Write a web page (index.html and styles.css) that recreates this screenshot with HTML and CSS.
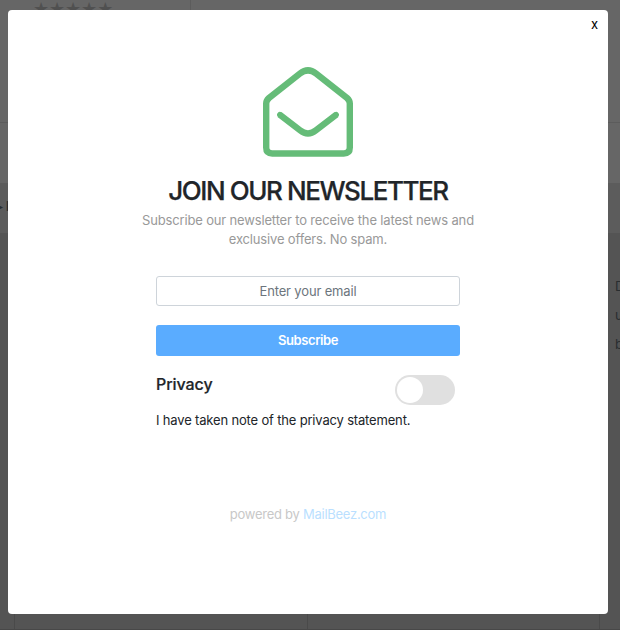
FILE: index.html
```html
<!DOCTYPE html>
<html lang="en">
<head>
<meta charset="utf-8">
<title>Join our newsletter</title>
<link rel="stylesheet" href="styles.css">
</head>
<body>
<div class="page">
  <div class="product"><div class="stars">★★★★★</div></div>
  <div class="shelf"></div>
  <div class="band"><span class="arrow">▸</span><span class="band-label">I</span></div>
  <div class="content">
    <div class="side-copy">D<br>u<br>b</div>
    <div class="columns"><div class="column"></div><div class="column"></div></div>
  </div>
</div>
<main class="modal">
  <button class="close" type="button">x</button>
  <svg class="envelope" viewBox="0 0 90 90" fill="none" stroke="#65bc78" stroke-width="6.4">
    <path d="M3.2 36.500V80.500Q3.200 86.500 9.200 86.500H80.800Q86.800 86.500 86.800 80.500V36.500Q86.800 33.500 84 31L53 6.500Q45 .300 37 6.500L6 31Q3.200 33.500 3.200 36.500Z"/>
    <path d="M16.500 47.500L37 63.300Q45 69.700 53 63.300L73.500 47.500"/>
    <path d="M17 47.900L16.900 47.820M73 47.900L73.100 47.820" stroke-width="5.600" stroke-linecap="round"/>
  </svg>
  <h1 class="title">JOIN OUR NEWSLETTER</h1>
  <p class="intro">Subscribe our newsletter to receive the latest news and<br>exclusive offers. No spam.</p>
  <form class="form">
    <input class="email" type="email" placeholder="Enter your email">
    <button class="subscribe" type="button">Subscribe</button>
    <div class="privacy">
      <h2 class="privacy-title">Privacy</h2>
      <span class="toggle"><span class="knob"></span></span>
    </div>
    <p class="note">I have taken note of the privacy statement.</p>
  </form>
  <p class="powered">powered by <a class="brand">MailBeez.com</a></p>
</main>
</body>
</html>
```
FILE: styles.css
```css
* { box-sizing: border-box; margin: 0; padding: 0; }
body { width: 620px; height: 630px; overflow: hidden; font-family: Inter, "Liberation Sans", sans-serif; font-size: 13px; color: #212529; }
.page { display: flex; flex-direction: column; height: 630px; background: #545454; }
.product { width: 100%; height: 123px; background: linear-gradient(#5c5c5c, #5c5c5c) 190px 0 / 1px 100% no-repeat #666; border-bottom: 1px solid #5c5c5c; }
.stars { padding-left: 33px; font: 18px/18px "DejaVu Sans", sans-serif; letter-spacing: -.1px; color: #505050; }
.shelf { height: 60px; background: #666; }
.band { display: flex; align-items: center; height: 50px; padding-bottom: 4px; background: #5c5c5c; color: #292d30; }
.arrow { width: 6px; font: 10px "DejaVu Sans", sans-serif; margin-left: -2px; }
.band-label { margin-left: 2px; font-weight: 700; }
.content { flex: 1; display: flex; flex-direction: column; justify-content: space-between; border-bottom: 1px solid #484848; }
.side-copy { padding: 39px 0 0 615px; line-height: 29px; color: #292d30; }
.columns { display: flex; height: 40px; margin-left: 14px; width: 586px; border-left: 1px solid #4a4a4a; }
.column { flex: 1; border-right: 1px solid #4a4a4a; }
.modal { position: absolute; left: 8px; top: 10px; width: 600px; height: 604px; border-radius: 4px; background: #fff; display: flex; flex-direction: column; align-items: center; }
.close { align-self: flex-end; margin: 6px 10px 0 0; height: 16px; border: 0; background: none; font: 13px/16px Inter, sans-serif; color: #000; }
.envelope { width: 90px; height: 90px; margin-top: 35px; flex: none; }
.title { margin-top: 18px; font-size: 26px; font-weight: 500; line-height: 32px; letter-spacing: -1.42px; -webkit-text-stroke: .25px #212529; white-space: nowrap; }
.intro { margin-top: 4px; line-height: 19px; letter-spacing: -.16px; text-align: center; color: #999; white-space: nowrap; }
.form { width: 304px; margin-top: 27px; }
.email { display: block; width: 304px; height: 30px; border: 1px solid #ced4da; border-radius: 3px; text-align: center; font: 13px Inter, sans-serif; letter-spacing: -.15px; }
.email::placeholder { color: #6c757d; opacity: 1; }
.subscribe { display: block; width: 304px; height: 31px; margin-top: 19px; padding-bottom: 1px; border: 0; border-radius: 3px; background: #5aacff; color: #fff; font: 600 13px Inter, sans-serif; letter-spacing: -.4px; }
.privacy { display: flex; justify-content: space-between; margin-top: 19px; padding-right: 5px; height: 30px; }
.privacy-title { font-size: 16px; font-weight: 500; line-height: 19px; letter-spacing: -.05px; -webkit-text-stroke: .2px #212529; }
.toggle { display: flex; align-items: center; width: 60px; height: 30px; padding-left: 2px; border-radius: 15px; background: #e0e0e0; }
.knob { width: 26px; height: 26px; border-radius: 50%; background: #fff; }
.note { margin-top: 6px; line-height: 19px; letter-spacing: -.17px; white-space: nowrap; }
.powered { margin-top: 75px; line-height: 19px; letter-spacing: -.26px; color: #c8c8c8; }
.brand { color: #badfff; }
```
